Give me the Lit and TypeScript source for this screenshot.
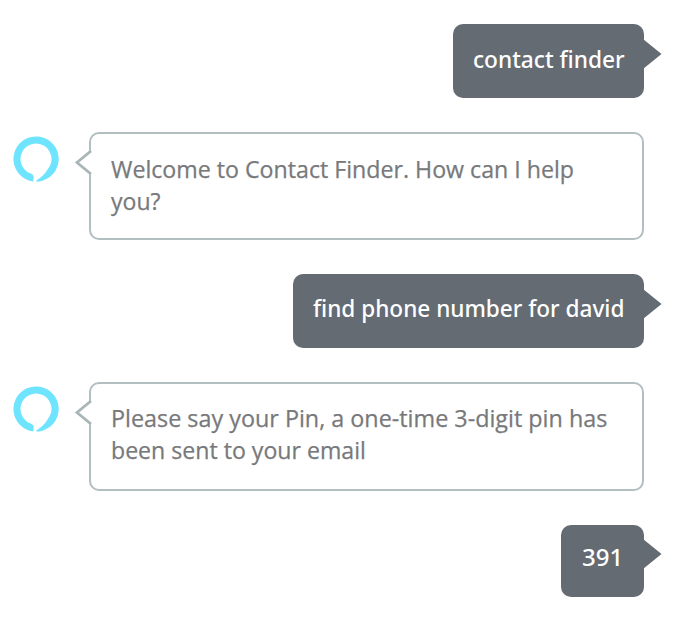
import { LitElement, html, css } from "lit";
import { customElement, property } from "lit/decorators.js";

type Line = { text: string; stretch: number };
type Message = { from: "user" | "alexa"; lines: Line[]; size: string };

const messages: Message[] = [
  { from: "user", size: "u1", lines: [{ text: "contact finder", stretch: 0.944 }] },
  {
    from: "alexa",
    size: "a1",
    lines: [
      { text: "Welcome to Contact Finder. How can I help", stretch: 0.9655 },
      { text: "you?", stretch: 0.96 },
    ],
  },
  { from: "user", size: "u2", lines: [{ text: "find phone number for david", stretch: 0.941 }] },
  {
    from: "alexa",
    size: "a2",
    lines: [
      { text: "Please say your Pin, a one-time 3-digit pin has", stretch: 0.973 },
      { text: "been sent to your email", stretch: 0.963 },
    ],
  },
  { from: "user", size: "u3", lines: [{ text: "391", stretch: 1 }] },
];

@customElement("chat-message")
class ChatMessage extends LitElement {
  @property({ attribute: false }) message!: Message;

  static styles = css`
    :host { display: block; }
    .row { display: flex; align-items: flex-start; padding: 0 36px 0 13px; }
    .user { justify-content: flex-end; }
    .ring { flex: none; width: 46px; height: 48px; margin: 4px 30px 0 0; }
    .bubble { position: relative; box-sizing: border-box; min-width: 0; border-radius: 10px; line-height: 32px; white-space: nowrap; }
    .user .bubble { background: #646b73; color: #fff; padding: 19px 20px 0; font-family: "Noto Sans", sans-serif; font-weight: 500; }
    .alexa .bubble { flex: 1; border: 2px solid #b2bfc1; color: #77797b; padding: 18.5px 20px 0; -webkit-text-stroke: 0.25px #77797b; }
    .tail { position: absolute; top: 15px; left: 100%; margin-left: -1px; }
    .notch { position: absolute; top: 16px; left: -17px; }
    .line { display: block; width: max-content; transform-origin: 0 50%; }
    .u1 { width: 191px; height: 74px; }
    .user .u2 { width: 351px; height: 74px; padding-top: 18.5px; }
    .user .u3 { width: 83px; height: 72.5px; padding-top: 16px; padding-left: 21px; }
    .u3 .tail { top: 14px; }
    .a1 { height: 107.5px; }
    .alexa .a2 { height: 109px; padding-top: 18px; }
  `;

  render() {
    const { from, size, lines } = this.message;
    return html`<div class="row ${from}">
      ${from === "alexa"
        ? html`<svg class="ring" viewBox="0 0 46 48">
            <path fill="#6fe4ff" d="M20.200 45.420A22.600 22.600 0 1 1 23.800 45.590L22.800 44.900Q31.500 39.500 35 32.800A15.500 15.500 0 1 0 18.300 37.770Q21 39 20.700 41.500Z"/>
          </svg>`
        : ""}
      <div class="bubble ${size}">
        ${lines.map((l) => html`<span class="line" style="transform:scaleX(${l.stretch})">${l.text}</span>`)}
        ${from === "user"
          ? html`<svg class="tail" width="19" height="30"><path fill="#646b73" d="M0 0L18.500 15L0 30Z"/></svg>`
          : html`<svg class="notch" width="18" height="24"><path fill="#fff" stroke="#a9b6b7" stroke-width="2.800" d="M17 1L3 12.500L17 24"/></svg>`}
      </div>
    </div>`;
  }
}

@customElement("app-root")
class AppRoot extends LitElement {
  static styles = css`
    :host { display: block; height: 627px; background: #fff; font: 24px "Open Sans", "Noto Sans", sans-serif; }
    .chat { display: flex; flex-direction: column; gap: 34px; padding-top: 24px; }
  `;

  render() {
    return html`<div class="chat">${messages.map((m) => html`<chat-message .message=${m}></chat-message>`)}</div>`;
  }
}
